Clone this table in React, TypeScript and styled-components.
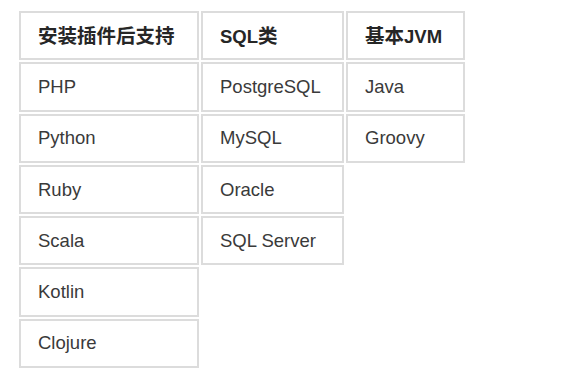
import styled, { createGlobalStyle } from "styled-components";

const GlobalStyle = createGlobalStyle`
	html, body {
		margin: 0;
		padding: 0;
		background: #ffffff;
	}
	body {
		font-family: "Liberation Sans", Arial, "Noto Sans CJK SC", sans-serif;
	}
`;

const Page = styled.div`
	padding: 9px 0 0 17px;
	width: 581px;
	height: 381px;
	box-sizing: border-box;
`;

const Table = styled.table`
	border-collapse: separate;
	border-spacing: 2px;
	table-layout: fixed;
`;

const Cell = styled.td<{ $width: number }>`
	box-sizing: border-box;
	width: ${(p) => p.$width}px;
	height: 49.3px;
	padding: 0 0 0 17px;
	border: 2px solid #dcdcdc;
	vertical-align: middle;
	text-align: left;
	font-size: 18.5px;
	line-height: 22px;
	color: #3a3a3a;
	white-space: nowrap;
`;

const HeadCell = styled(Cell).attrs({ as: "th" })`
	font-weight: bold;
	color: #262626;
`;

const Han = styled.span`
	font-family: "Noto Sans CJK SC", sans-serif;
	font-size: 19.5px;
`;

const widths = [180, 143, 119];

const columns: { head: React.ReactNode; items: string[] }[] = [
	{
		head: <Han>安装插件后支持</Han>,
		items: ["PHP", "Python", "Ruby", "Scala", "Kotlin", "Clojure"],
	},
	{
		head: (
			<>
				SQL<Han>类</Han>
			</>
		),
		items: ["PostgreSQL", "MySQL", "Oracle", "SQL Server"],
	},
	{
		head: (
			<>
				<Han>基本</Han>JVM
			</>
		),
		items: ["Java", "Groovy"],
	},
];

const rowCount = Math.max(...columns.map((c) => c.items.length));

const App = () => {
	return (
		<>
			<GlobalStyle />
			<Page>
				<Table>
					<thead>
						<tr>
							{columns.map((col, idx) => (
								<HeadCell key={idx} $width={widths[idx]}>
									{col.head}
								</HeadCell>
							))}
						</tr>
					</thead>
					<tbody>
						{Array.from({ length: rowCount }).map((_, row) => (
							<tr key={row}>
								{columns
									.filter((col) => row < col.items.length)
									.map((col, idx) => (
										<Cell key={idx} $width={widths[idx]}>
											{col.items[row]}
										</Cell>
									))}
							</tr>
						))}
					</tbody>
				</Table>
			</Page>
		</>
	);
};

export default App;
